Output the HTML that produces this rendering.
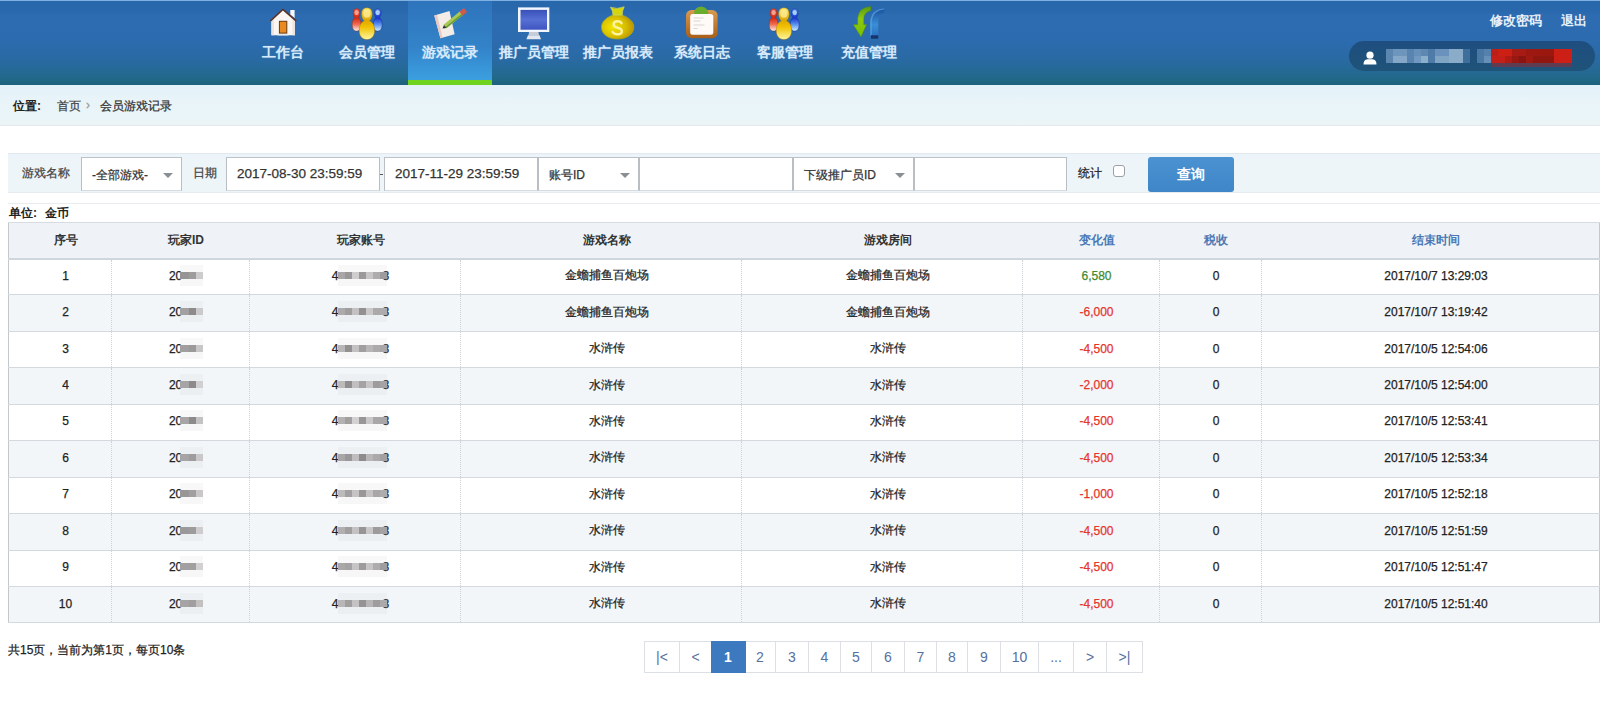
<!DOCTYPE html>
<html><head><meta charset="utf-8">
<style>
*{box-sizing:border-box;margin:0;padding:0}
html,body{width:1600px;height:708px;overflow:hidden;background:#fff}
body{font-family:"Liberation Sans",sans-serif;font-size:12px;color:#333;position:relative;-webkit-text-stroke:.25px}
.abs{position:absolute}
#hdr{left:0;top:0;width:1600px;height:85px;background:linear-gradient(#2967ab 0px,#2a68ad 10px,#2d6cb1 14px,#2c6bae 40px,#296aa4 58px,#23698f 74px,#1f6683 80px,#1d607a 85px);border-top:1px solid #80b0e2}
.nav{top:0;height:85px;width:84px;text-align:center}
.nav.act{top:1px;height:84px;background:linear-gradient(#2e74bc 0%,#3383c9 55%,#3b9fdf 93%)}
.nav.act svg{top:5px}
.nav.act .lbl{top:42px}
.nav.act:after{content:"";position:absolute;left:0;right:0;bottom:0;height:5px;background:#6fd320}
.nav .lbl{position:absolute;left:0;right:0;top:43px;font-size:14px;font-weight:bold;color:#d8eafa;line-height:18px;white-space:nowrap;text-shadow:0 0 1.5px rgba(170,210,250,.45)}
.nav svg{position:absolute;top:6px}
#crumb{left:0;top:85px;width:1600px;height:41px;background:linear-gradient(#e3f1f9,#e8f4f8 40%,#ebf5f8);border-bottom:1px solid #e6e8ec}
#filter{left:8px;top:153px;width:1592px;height:40px;background:linear-gradient(#ebf4fa,#eef5f9 8px);border-top:1px solid #e2e9ef;border-bottom:1px solid #e6ebef}
.inp{position:absolute;top:157px;height:34px;background:#fff;border:1px solid #b8bec3;border-top-color:#bcc2c7;border-bottom-color:#d6dbe0;font-size:13.5px;color:#333;line-height:32px;padding-left:10px;white-space:nowrap}
.sel{font-size:12px;line-height:34px}
.arr{position:absolute;top:15px;width:0;height:0;border-left:5px solid transparent;border-right:5px solid transparent;border-top:5px solid #8a8f94}
.flbl{position:absolute;top:165px;font-size:12px;color:#444;line-height:16px}
table{position:absolute;left:8px;top:222px;width:1590px;border-collapse:collapse;table-layout:fixed;border-left:1px solid #c3c8cd;border-right:1px solid #c3c8cd;border-bottom:1px solid #c3c8cd}
th{height:36px;padding-left:11px;background:#eff3f7;font-weight:bold;font-size:12px;color:#333;border-top:1px solid #d6dce1;border-bottom:2px solid #cfd6dc}
th.b{color:#4b78b4}
td{height:36.44px;text-align:center;padding-left:11px;padding-bottom:2px;font-size:12px;color:#222;border-bottom:1px solid #d3d9df;border-left:1px dotted #cdd2d6}
td:first-child{border-left:none}
tr.alt td{background:#f3f6f9}
.g{color:#3f8c2e}.r{color:#e5352c}
.mos{display:inline-flex;vertical-align:top;margin-top:3px;height:7px;position:relative;z-index:1;box-shadow:0 -7px 0 rgba(200,200,200,.12),0 7px 0 rgba(200,200,200,.15)}
.mos i{display:block;width:7px;height:7px}
#pg{left:644px;top:641px;height:32px;display:flex;border:1px solid #dcdfe3;border-right:none}
#pg div{height:30px;line-height:30px;text-align:center;border-right:1px solid #dcdfe3;color:#5670a0;font-size:14px}
#pg div.on{background:#3d79be;color:#fff;font-weight:bold;border-right-color:#3d79be;box-shadow:0 0 0 1px #3d79be;position:relative}
b,th,.lbl,.bold{-webkit-text-stroke:0}
#pg div{-webkit-text-stroke:0}
</style></head><body>
<div id="hdr" class="abs"></div>

<div class="abs" style="left:0;top:0;width:1600px;height:85px">
 <svg width="0" height="0" style="position:absolute"><defs>
  <linearGradient id="gr" x1="0" y1="0" x2="0" y2="1"><stop offset="0" stop-color="#e85040"/><stop offset=".42" stop-color="#d82a10"/><stop offset=".7" stop-color="#f06a50"/><stop offset="1" stop-color="#fff0e8"/></linearGradient>
  <linearGradient id="grh" x1="0" y1="0" x2="0" y2="1"><stop offset="0" stop-color="#f8b0a0"/><stop offset="1" stop-color="#e06050"/></linearGradient>
  <linearGradient id="gb" x1="0" y1="0" x2="0" y2="1"><stop offset="0" stop-color="#5080e8"/><stop offset=".42" stop-color="#1838d0"/><stop offset=".7" stop-color="#5a90f0"/><stop offset="1" stop-color="#d0f0ff"/></linearGradient>
  <linearGradient id="gbh" x1="0" y1="0" x2="0" y2="1"><stop offset="0" stop-color="#c0e0ff"/><stop offset="1" stop-color="#60a0f0"/></linearGradient>
  <linearGradient id="gy" x1="0" y1="0" x2="0" y2="1"><stop offset="0" stop-color="#f8e060"/><stop offset=".4" stop-color="#e0a800"/><stop offset=".6" stop-color="#f0c000"/><stop offset="1" stop-color="#fff8a0"/></linearGradient>
  <linearGradient id="gyh" x1="0" y1="0" x2="0" y2="1"><stop offset="0" stop-color="#fff4a0"/><stop offset="1" stop-color="#e8b800"/></linearGradient>
  <radialGradient id="gm" cx=".35" cy=".5" r=".7"><stop offset="0" stop-color="#f2e600"/><stop offset=".6" stop-color="#d6bc00"/><stop offset="1" stop-color="#b88a00"/></radialGradient>
  <linearGradient id="gs" x1="0" y1="0" x2="0" y2="1"><stop offset="0" stop-color="#3a50b8"/><stop offset=".5" stop-color="#5670d4"/><stop offset="1" stop-color="#3f54c0"/></linearGradient>
  <linearGradient id="gc" x1="0" y1="0" x2="0" y2="1"><stop offset="0" stop-color="#d89a50"/><stop offset="1" stop-color="#a85e18"/></linearGradient>
  <linearGradient id="ga" x1="0" y1="0" x2="0" y2="1"><stop offset="0" stop-color="#5a9a10"/><stop offset=".4" stop-color="#8cc810"/><stop offset="1" stop-color="#7ac000"/></linearGradient>
  <linearGradient id="gbl" x1="0" y1="0" x2="0" y2="1"><stop offset="0" stop-color="#1a4e98"/><stop offset=".6" stop-color="#3a8ed6"/><stop offset="1" stop-color="#2a74c4"/></linearGradient>
 </defs></svg>
 <div class="nav abs" style="left:241px">
  <svg width="34" height="34" viewBox="0 0 34 34" style="left:26px"><path d="M23.3 4 H27.6 V12 L23.3 8.5Z" fill="#f6f8fc"/><path d="M4.4 13.8 L15.9 3.6 L28 13.8 V29.2 H4.4Z" fill="#faf6f4"/><path d="M4.4 14 V29.2 H7 V12Z M28 14 V29.2 H25.5 V12Z" fill="#ece4e0"/><path d="M2.8 14.4 L15.9 2.6 L29.8 14.4 L28.6 15.4 L15.9 4.6 L4 15.4Z" fill="#5a3020"/><rect x="12.4" y="15.3" width="7.4" height="11.8" fill="#e88a20" stroke="#6a3a10" stroke-width="1"/><rect x="10.5" y="28.3" width="11" height="1.2" fill="#e0e4ea"/></svg>
  <div class="lbl">工作台</div></div>
 <div class="nav abs" style="left:325px">
  <svg width="34" height="34" viewBox="0 0 34 34" style="left:26px"><path d="M5.6 2.6 C8.6 2.6 9 5.5 9 7.5 C9 9.6 8 10.8 7.2 11.6 C9 12.6 10 15 10 18.5 C10 23 8 25 5.6 25 C3 25 1.2 23 1.2 18.5 C1.2 15 2.2 12.6 4 11.6 C3.2 10.8 2.2 9.6 2.2 7.5 C2.2 5.5 2.6 2.6 5.6 2.6Z" fill="url(#gr)" stroke="#8a2010" stroke-width=".4"/><ellipse cx="5.6" cy="6.6" rx="2.2" ry="2.6" fill="#f8b8a8" opacity=".8"/><path d="M26.7 2.6 C29.7 2.6 30.1 5.5 30.1 7.5 C30.1 9.6 29.1 10.8 28.3 11.6 C30.1 12.6 31.1 15 31.1 18.5 C31.1 23 29.1 25 26.7 25 C24.1 25 22.3 23 22.3 18.5 C22.3 15 23.3 12.6 25.1 11.6 C24.3 10.8 23.3 9.6 23.3 7.5 C23.3 5.5 23.7 2.6 26.7 2.6Z" fill="url(#gb)" stroke="#102080" stroke-width=".4"/><ellipse cx="26.7" cy="6.6" rx="2.2" ry="2.6" fill="#b8e0ff" opacity=".85"/><path d="M15.9 1.8 C20.5 1.8 21.2 5.5 21.2 8.5 C21.2 11.5 19.8 13.6 18.6 14.8 C21.8 16.2 23.6 19.5 23.6 24.5 C23.6 30.5 20 33.5 15.9 33.5 C11.8 33.5 8.2 30.5 8.2 24.5 C8.2 19.5 10 16.2 13.2 14.8 C12 13.6 10.6 11.5 10.6 8.5 C10.6 5.5 11.3 1.8 15.9 1.8Z" fill="url(#gy)" stroke="#a87000" stroke-width=".4"/><ellipse cx="15.9" cy="7.5" rx="3.6" ry="4.2" fill="#fff0a0" opacity=".75"/></svg>
  <div class="lbl">会员管理</div></div>
 <div class="nav act abs" style="left:408px">
  <svg width="34" height="34" viewBox="0 0 34 34" style="left:26px"><path d="M0.3 9.6 L15.5 5 L20.6 28.2 L6.4 32.2 Z" fill="#f4ece6"/><path d="M0.3 9.6 L3 8.8 L8.5 31.6 L6.4 32.2Z" fill="#e8c8c0"/><line x1="11" y1="20.5" x2="27.5" y2="7.2" stroke="#a8c858" stroke-width="4.8"/><line x1="11" y1="20.5" x2="27.5" y2="7.2" stroke="#6a9a30" stroke-width="1.5" transform="translate(1 1)"/><line x1="27" y1="7.6" x2="31.5" y2="4" stroke="#d05a4a" stroke-width="5"/><path d="M8.5 22.5 L10 19 L12.5 22Z" fill="#333"/></svg>
  <div class="lbl">游戏记录</div></div>
 <div class="nav abs" style="left:492px">
  <svg width="34" height="34" viewBox="0 0 34 34" style="left:26px"><rect x="0" y="1.4" width="31.3" height="24.6" fill="#f2f6fe"/><rect x="2.5" y="3.9" width="26.5" height="19.8" fill="url(#gs)"/><path d="M11 26 H20.5 L21 29.3 H10.5Z" fill="#c8ccd4"/><path d="M10 29.3 H21.5 L23 33.3 H8.4Z" fill="#e4e8ee"/></svg>
  <div class="lbl">推广员管理</div></div>
 <div class="nav abs" style="left:576px">
  <svg width="34" height="34" viewBox="0 0 34 34" style="left:25px"><path d="M12 9 C4 12 0.5 16.5 0.5 21 C0.5 28.5 7.5 33 16.5 33 C25.5 33 32.8 28.5 32.8 21 C32.8 16.5 29 12 21 9 Z" fill="url(#gm)" stroke="#a8a818" stroke-width=".8"/><path d="M9.5 1.2 Q16 3.8 23.2 0.8 Q21 5 21.2 9.2 L12 9.2 Q12.2 5 9.5 1.2Z" fill="#d6d40c" stroke="#c8d868" stroke-width=".7"/><path d="M20.6 17.2 Q19.3 15.3 16.5 15.3 Q12.6 15.3 12.6 18.3 Q12.6 21 16.6 21.7 Q20.8 22.5 20.8 25.2 Q20.8 28.3 16.5 28.3 Q13 28.3 11.6 26" fill="none" stroke="#fff2a0" stroke-width="2.4" stroke-linecap="round"/></svg>
  <div class="lbl">推广员报表</div></div>
 <div class="nav abs" style="left:660px">
  <svg width="34" height="34" viewBox="0 0 34 34" style="left:26px"><rect x="0" y="4" width="31.6" height="28.2" rx="5.5" fill="url(#gc)"/><rect x="4.2" y="8.1" width="23.1" height="20.7" rx="2.5" fill="#fdfaf8"/><path d="M7.5 12h10M7.5 15h7M7.5 19h11M7.5 22.5h4" stroke="#ddd6d2" stroke-width="1"/><path d="M8 8 Q8 1 15 0.5 Q22.2 1 22.2 8Z" fill="#6aac2c"/></svg>
  <div class="lbl">系统日志</div></div>
 <div class="nav abs" style="left:743px">
  <svg width="34" height="34" viewBox="0 0 34 34" style="left:25px"><path d="M5.6 2.6 C8.6 2.6 9 5.5 9 7.5 C9 9.6 8 10.8 7.2 11.6 C9 12.6 10 15 10 18.5 C10 23 8 25 5.6 25 C3 25 1.2 23 1.2 18.5 C1.2 15 2.2 12.6 4 11.6 C3.2 10.8 2.2 9.6 2.2 7.5 C2.2 5.5 2.6 2.6 5.6 2.6Z" fill="url(#gr)" stroke="#8a2010" stroke-width=".4"/><ellipse cx="5.6" cy="6.6" rx="2.2" ry="2.6" fill="#f8b8a8" opacity=".8"/><path d="M26.7 2.6 C29.7 2.6 30.1 5.5 30.1 7.5 C30.1 9.6 29.1 10.8 28.3 11.6 C30.1 12.6 31.1 15 31.1 18.5 C31.1 23 29.1 25 26.7 25 C24.1 25 22.3 23 22.3 18.5 C22.3 15 23.3 12.6 25.1 11.6 C24.3 10.8 23.3 9.6 23.3 7.5 C23.3 5.5 23.7 2.6 26.7 2.6Z" fill="url(#gb)" stroke="#102080" stroke-width=".4"/><ellipse cx="26.7" cy="6.6" rx="2.2" ry="2.6" fill="#b8e0ff" opacity=".85"/><path d="M15.9 1.8 C20.5 1.8 21.2 5.5 21.2 8.5 C21.2 11.5 19.8 13.6 18.6 14.8 C21.8 16.2 23.6 19.5 23.6 24.5 C23.6 30.5 20 33.5 15.9 33.5 C11.8 33.5 8.2 30.5 8.2 24.5 C8.2 19.5 10 16.2 13.2 14.8 C12 13.6 10.6 11.5 10.6 8.5 C10.6 5.5 11.3 1.8 15.9 1.8Z" fill="url(#gy)" stroke="#a87000" stroke-width=".4"/><ellipse cx="15.9" cy="7.5" rx="3.6" ry="4.2" fill="#fff0a0" opacity=".75"/></svg>
  <div class="lbl">客服管理</div></div>
 <div class="nav abs" style="left:827px">
  <svg width="34" height="34" viewBox="0 0 34 34" style="left:26px"><path d="M31.2 2.2 Q19 3 17.3 14 L17.3 29.5 L25.3 29.5 L25.3 15 Q25.8 8.3 31.2 6.8Z" fill="url(#gbl)"/><path d="M31.2 2.2 Q19 3 17.3 14 L17.3 29.5 L18.8 29.5 L18.8 14.5 Q20.5 4.5 31.2 3.6Z" fill="#5aa6e6" opacity=".7"/><rect x="18" y="29.3" width="7.2" height="3.4" fill="#17356c"/><path d="M17.8 0.5 Q6 1 4.6 12 L4.6 18.6 L0.2 18.6 L8 31 L13.6 18.6 L10.8 18.6 L10.8 12.5 Q11.2 6.2 17.8 4.6 Z" fill="url(#ga)" stroke="#4a8a10" stroke-width=".5"/></svg>
  <div class="lbl">充值管理</div></div>
</div>

<div class="abs bold" style="left:1490px;top:13px;font-size:13px;font-weight:bold;color:#e8f0fa;line-height:16px">修改密码</div>
<div class="abs bold" style="left:1561px;top:13px;font-size:13px;font-weight:bold;color:#e8f0fa;line-height:16px">退出</div>
<div class="abs" style="left:1349px;top:41px;width:246px;height:30px;border-radius:15px;background:linear-gradient(#1e4e80,#1f5378);overflow:hidden">
<div style="position:absolute;left:0;top:0;width:246px;height:30px;filter:blur(.6px)"><div style="position:absolute;left:37.3px;top:8px;width:7.0px;height:7px;background:#5a86b0"></div><div style="position:absolute;left:37.3px;top:15px;width:7.0px;height:7px;background:#5a86b0"></div><div style="position:absolute;left:44.3px;top:8px;width:7.0px;height:7px;background:#6e96bd"></div><div style="position:absolute;left:44.3px;top:15px;width:7.0px;height:7px;background:#86a8c8"></div><div style="position:absolute;left:51.3px;top:8px;width:7.0px;height:7px;background:#6e96bd"></div><div style="position:absolute;left:51.3px;top:15px;width:7.0px;height:7px;background:#86a8c8"></div><div style="position:absolute;left:58.3px;top:8px;width:7.0px;height:7px;background:#5a84b0"></div><div style="position:absolute;left:58.3px;top:15px;width:7.0px;height:7px;background:#5a84b0"></div><div style="position:absolute;left:65.3px;top:8px;width:7.0px;height:7px;background:#6690ba"></div><div style="position:absolute;left:65.3px;top:15px;width:7.0px;height:7px;background:#7098c0"></div><div style="position:absolute;left:72.3px;top:8px;width:7.0px;height:7px;background:#5e88b2"></div><div style="position:absolute;left:72.3px;top:15px;width:7.0px;height:7px;background:#8ab0cc"></div><div style="position:absolute;left:79.3px;top:8px;width:7.0px;height:7px;background:#4f7ba8"></div><div style="position:absolute;left:79.3px;top:15px;width:7.0px;height:7px;background:#4f7ba8"></div><div style="position:absolute;left:86.3px;top:8px;width:7.0px;height:7px;background:#6a92bc"></div><div style="position:absolute;left:86.3px;top:15px;width:7.0px;height:7px;background:#80a4c4"></div><div style="position:absolute;left:93.3px;top:8px;width:7.0px;height:7px;background:#6a92bc"></div><div style="position:absolute;left:93.3px;top:15px;width:7.0px;height:7px;background:#80a4c4"></div><div style="position:absolute;left:100.3px;top:8px;width:7.0px;height:7px;background:#8aacc8"></div><div style="position:absolute;left:100.3px;top:15px;width:7.0px;height:7px;background:#8aacc8"></div><div style="position:absolute;left:107.3px;top:8px;width:7.0px;height:7px;background:#8aacc8"></div><div style="position:absolute;left:107.3px;top:15px;width:7.0px;height:7px;background:#8aacc8"></div><div style="position:absolute;left:114.3px;top:8px;width:7.0px;height:7px;background:#3f6d9c"></div><div style="position:absolute;left:114.3px;top:15px;width:7.0px;height:7px;background:#3f6d9c"></div><div style="position:absolute;left:128.3px;top:8px;width:7.0px;height:7px;background:#4a78a4"></div><div style="position:absolute;left:128.3px;top:15px;width:7.0px;height:7px;background:#4a78a4"></div><div style="position:absolute;left:135.3px;top:8px;width:7.0px;height:7px;background:#5580ac"></div><div style="position:absolute;left:135.3px;top:15px;width:7.0px;height:7px;background:#6690b8"></div><div style="position:absolute;left:142.1px;top:8px;width:7.0px;height:7px;background:#b82018"></div><div style="position:absolute;left:149.1px;top:8px;width:14.0px;height:7px;background:#cc2014"></div><div style="position:absolute;left:163.1px;top:8px;width:14.0px;height:7px;background:#a81a14"></div><div style="position:absolute;left:177.1px;top:8px;width:14.0px;height:7px;background:#9e1812"></div><div style="position:absolute;left:191.1px;top:8px;width:14.0px;height:7px;background:#9a1810"></div><div style="position:absolute;left:205.1px;top:8px;width:18.3px;height:7px;background:#cc2016"></div><div style="position:absolute;left:142.1px;top:15px;width:14.0px;height:7px;background:#c42018"></div><div style="position:absolute;left:156.1px;top:15px;width:7.0px;height:7px;background:#b01c14"></div><div style="position:absolute;left:163.1px;top:15px;width:7.0px;height:7px;background:#981812"></div><div style="position:absolute;left:170.1px;top:15px;width:7.0px;height:7px;background:#8a1410"></div><div style="position:absolute;left:177.1px;top:15px;width:7.0px;height:7px;background:#a01a12"></div><div style="position:absolute;left:184.1px;top:15px;width:21.0px;height:7px;background:#901610"></div><div style="position:absolute;left:205.1px;top:15px;width:18.3px;height:7px;background:#cc2016"></div><div style="position:absolute;left:142.1px;top:22px;width:81.3px;height:4px;background:rgba(150,40,50,.55)"></div></div></div>
<svg class="abs" style="left:1363px;top:51px" width="14" height="14" viewBox="0 0 14 14"><circle cx="7" cy="4.2" r="3.6" fill="#fff"/><path d="M0.5 13.5 Q0.5 8.8 4.5 8.3 L9.5 8.3 Q13.5 8.8 13.5 13.5Z" fill="#fff"/></svg>

<div id="crumb" class="abs"></div>
<div class="abs" style="left:13px;top:98px;line-height:16px;font-size:12px"><b style="color:#222">位置:</b></div>
<div class="abs" style="left:57px;top:98px;line-height:16px;color:#444">首页</div>
<div class="abs" style="left:86px;top:97px;line-height:16px;color:#999;font-size:12px">›</div>
<div class="abs" style="left:100px;top:98px;line-height:16px;color:#333">会员游戏记录</div>

<div id="filter" class="abs"></div>
<div class="abs" style="left:8px;top:203px;width:1592px;height:1px;background:#e8ecef"></div>
<div class="flbl" style="left:22px">游戏名称</div>
<div class="inp sel" style="left:81px;width:101px">-全部游戏-<i class="arr" style="left:81px"></i></div>
<div class="flbl" style="left:193px">日期</div>
<div class="inp" style="left:226px;width:154px">2017-08-30 23:59:59</div>
<div class="abs" style="left:380px;top:174px;width:3px;height:1px;background:#555"></div>
<div class="inp" style="left:384px;width:154px">2017-11-29 23:59:59</div>
<div class="inp sel" style="left:538px;width:101px">账号ID<i class="arr" style="left:81px"></i></div>
<div class="inp" style="left:639px;width:154px"></div>
<div class="inp sel" style="left:793px;width:121px">下级推广员ID<i class="arr" style="left:101px"></i></div>
<div class="inp" style="left:914px;width:153px"></div>
<div class="flbl" style="left:1078px;color:#222">统计</div>
<div class="abs" style="left:1113px;top:165px;width:12px;height:12px;border:1px solid #9aa0a6;border-radius:3px;background:#fff"></div>
<div class="abs" style="left:1148px;top:157px;width:86px;height:35px;border-radius:3px;background:linear-gradient(#4b92d2,#3f86c8);color:#fff;font-weight:bold;font-size:14px;text-align:center;line-height:35px;-webkit-text-stroke:0">查询</div>

<div class="abs bold" style="left:9px;top:205px;line-height:16px;font-weight:bold;color:#222">单位:<span style="margin-left:8px">金币</span></div>

<table>
<colgroup><col style="width:103px"><col style="width:138px"><col style="width:211px"><col style="width:281px"><col style="width:281px"><col style="width:137px"><col style="width:102px"><col style="width:338px"></colgroup>
<tr><th>序号</th><th>玩家ID</th><th>玩家账号</th><th>游戏名称</th><th>游戏房间</th><th class="b">变化值</th><th class="b">税收</th><th class="b">结束时间</th></tr>
<tr><td>1</td><td>20<span class="mos" style="margin-left:-2.5px"><i style="width:9.3px;background:rgb(150,148,149)"></i><i style="background:rgb(158,156,157)"></i><i style="background:rgb(205,203,204)"></i></span></td><td>4<span class="mos" style="margin-left:-1px;margin-right:-4px"><i style="background:rgb(168,166,167)"></i><i style="background:rgb(153,151,152)"></i><i style="background:rgb(207,205,206)"></i><i style="background:rgb(155,153,154)"></i><i style="background:rgb(200,198,199)"></i><i style="background:rgb(174,172,173)"></i><i style="background:rgb(158,156,157)"></i></span>8</td><td>金蟾捕鱼百炮场</td><td>金蟾捕鱼百炮场</td><td class="g">6,580</td><td>0</td><td>2017/10/7 13:29:03</td></tr>
<tr class="alt"><td>2</td><td>20<span class="mos" style="margin-left:-2.5px"><i style="width:9.3px;background:rgb(162,160,161)"></i><i style="background:rgb(140,138,139)"></i><i style="background:rgb(203,201,202)"></i></span></td><td>4<span class="mos" style="margin-left:-1px;margin-right:-4px"><i style="background:rgb(172,170,171)"></i><i style="background:rgb(159,157,158)"></i><i style="background:rgb(195,193,194)"></i><i style="background:rgb(146,144,145)"></i><i style="background:rgb(202,200,201)"></i><i style="background:rgb(171,169,170)"></i><i style="background:rgb(173,171,172)"></i></span>8</td><td>金蟾捕鱼百炮场</td><td>金蟾捕鱼百炮场</td><td class="r">-6,000</td><td>0</td><td>2017/10/7 13:19:42</td></tr>
<tr><td>3</td><td>20<span class="mos" style="margin-left:-2.5px"><i style="width:9.3px;background:rgb(160,158,159)"></i><i style="background:rgb(155,153,154)"></i><i style="background:rgb(200,198,199)"></i></span></td><td>4<span class="mos" style="margin-left:-1px;margin-right:-4px"><i style="background:rgb(184,182,183)"></i><i style="background:rgb(146,144,145)"></i><i style="background:rgb(195,193,194)"></i><i style="background:rgb(160,158,159)"></i><i style="background:rgb(184,182,183)"></i><i style="background:rgb(172,170,171)"></i><i style="background:rgb(168,166,167)"></i></span>8</td><td>水浒传</td><td>水浒传</td><td class="r">-4,500</td><td>0</td><td>2017/10/5 12:54:06</td></tr>
<tr class="alt"><td>4</td><td>20<span class="mos" style="margin-left:-2.5px"><i style="width:9.3px;background:rgb(166,164,165)"></i><i style="background:rgb(140,138,139)"></i><i style="background:rgb(209,207,208)"></i></span></td><td>4<span class="mos" style="margin-left:-1px;margin-right:-4px"><i style="background:rgb(188,186,187)"></i><i style="background:rgb(144,142,143)"></i><i style="background:rgb(193,191,192)"></i><i style="background:rgb(164,162,163)"></i><i style="background:rgb(198,196,197)"></i><i style="background:rgb(157,155,156)"></i><i style="background:rgb(165,163,164)"></i></span>8</td><td>水浒传</td><td>水浒传</td><td class="r">-2,000</td><td>0</td><td>2017/10/5 12:54:00</td></tr>
<tr><td>5</td><td>20<span class="mos" style="margin-left:-2.5px"><i style="width:9.3px;background:rgb(167,165,166)"></i><i style="background:rgb(140,138,139)"></i><i style="background:rgb(196,194,195)"></i></span></td><td>4<span class="mos" style="margin-left:-1px;margin-right:-4px"><i style="background:rgb(179,177,178)"></i><i style="background:rgb(161,159,160)"></i><i style="background:rgb(211,209,210)"></i><i style="background:rgb(152,150,151)"></i><i style="background:rgb(202,200,201)"></i><i style="background:rgb(169,167,168)"></i><i style="background:rgb(168,166,167)"></i></span>8</td><td>水浒传</td><td>水浒传</td><td class="r">-4,500</td><td>0</td><td>2017/10/5 12:53:41</td></tr>
<tr class="alt"><td>6</td><td>20<span class="mos" style="margin-left:-2.5px"><i style="width:9.3px;background:rgb(166,164,165)"></i><i style="background:rgb(158,156,157)"></i><i style="background:rgb(202,200,201)"></i></span></td><td>4<span class="mos" style="margin-left:-1px;margin-right:-4px"><i style="background:rgb(168,166,167)"></i><i style="background:rgb(153,151,152)"></i><i style="background:rgb(191,189,190)"></i><i style="background:rgb(141,139,140)"></i><i style="background:rgb(184,182,183)"></i><i style="background:rgb(171,169,170)"></i><i style="background:rgb(162,160,161)"></i></span>8</td><td>水浒传</td><td>水浒传</td><td class="r">-4,500</td><td>0</td><td>2017/10/5 12:53:34</td></tr>
<tr><td>7</td><td>20<span class="mos" style="margin-left:-2.5px"><i style="width:9.3px;background:rgb(151,149,150)"></i><i style="background:rgb(161,159,160)"></i><i style="background:rgb(201,199,200)"></i></span></td><td>4<span class="mos" style="margin-left:-1px;margin-right:-4px"><i style="background:rgb(188,186,187)"></i><i style="background:rgb(162,160,161)"></i><i style="background:rgb(197,195,196)"></i><i style="background:rgb(153,151,152)"></i><i style="background:rgb(196,194,195)"></i><i style="background:rgb(168,166,167)"></i><i style="background:rgb(174,172,173)"></i></span>8</td><td>水浒传</td><td>水浒传</td><td class="r">-1,000</td><td>0</td><td>2017/10/5 12:52:18</td></tr>
<tr class="alt"><td>8</td><td>20<span class="mos" style="margin-left:-2.5px"><i style="width:9.3px;background:rgb(154,152,153)"></i><i style="background:rgb(157,155,156)"></i><i style="background:rgb(206,204,205)"></i></span></td><td>4<span class="mos" style="margin-left:-1px;margin-right:-4px"><i style="background:rgb(177,175,176)"></i><i style="background:rgb(160,158,159)"></i><i style="background:rgb(195,193,194)"></i><i style="background:rgb(150,148,149)"></i><i style="background:rgb(201,199,200)"></i><i style="background:rgb(156,154,155)"></i><i style="background:rgb(164,162,163)"></i></span>8</td><td>水浒传</td><td>水浒传</td><td class="r">-4,500</td><td>0</td><td>2017/10/5 12:51:59</td></tr>
<tr><td>9</td><td>20<span class="mos" style="margin-left:-2.5px"><i style="width:9.3px;background:rgb(162,160,161)"></i><i style="background:rgb(161,159,160)"></i><i style="background:rgb(210,208,209)"></i></span></td><td>4<span class="mos" style="margin-left:-1px;margin-right:-4px"><i style="background:rgb(169,167,168)"></i><i style="background:rgb(164,162,163)"></i><i style="background:rgb(198,196,197)"></i><i style="background:rgb(157,155,156)"></i><i style="background:rgb(198,196,197)"></i><i style="background:rgb(174,172,173)"></i><i style="background:rgb(159,157,158)"></i></span>8</td><td>水浒传</td><td>水浒传</td><td class="r">-4,500</td><td>0</td><td>2017/10/5 12:51:47</td></tr>
<tr class="alt"><td>10</td><td>20<span class="mos" style="margin-left:-2.5px"><i style="width:9.3px;background:rgb(165,163,164)"></i><i style="background:rgb(160,158,159)"></i><i style="background:rgb(194,192,193)"></i></span></td><td>4<span class="mos" style="margin-left:-1px;margin-right:-4px"><i style="background:rgb(184,182,183)"></i><i style="background:rgb(160,158,159)"></i><i style="background:rgb(196,194,195)"></i><i style="background:rgb(149,147,148)"></i><i style="background:rgb(183,181,182)"></i><i style="background:rgb(158,156,157)"></i><i style="background:rgb(171,169,170)"></i></span>8</td><td>水浒传</td><td>水浒传</td><td class="r">-4,500</td><td>0</td><td>2017/10/5 12:51:40</td></tr>
</table>

<div class="abs" style="left:8px;top:642px;line-height:16px;color:#222">共15页，当前为第1页，每页10条</div>

<div id="pg" class="abs">
<div style="width:35px">|&lt;</div><div style="width:32px">&lt;</div><div class="on" style="width:33px">1</div><div style="width:31px">2</div><div style="width:33px">3</div><div style="width:32px">4</div><div style="width:31px">5</div><div style="width:33px">6</div><div style="width:32px">7</div><div style="width:31px">8</div><div style="width:33px">9</div><div style="width:38px">10</div><div style="width:35px">...</div><div style="width:33px">&gt;</div><div style="width:36px">&gt;|</div>
</div>
</body></html>
